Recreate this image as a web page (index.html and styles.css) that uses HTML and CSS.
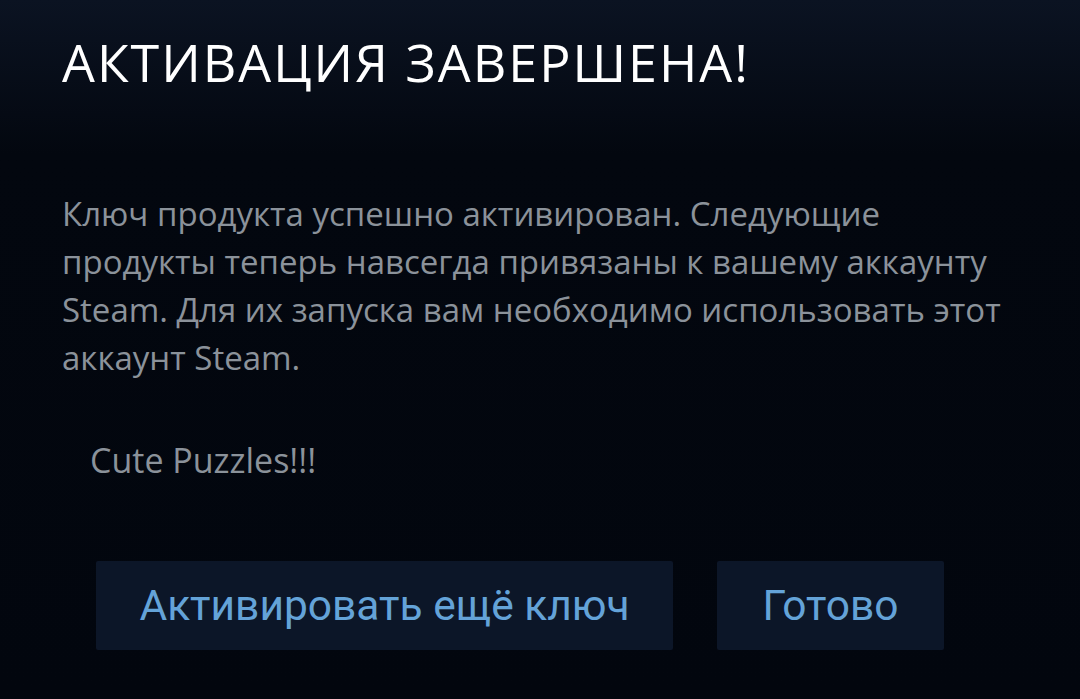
FILE: index.html
```html
<!DOCTYPE html>
<html lang="ru">
<head>
  <meta charset="UTF-8" />
  <meta name="viewport" content="width=device-width, initial-scale=1.0" />
  <title>Активация завершена</title>
  <link rel="stylesheet" href="styles.css">
</head>
<body>
  <div class="dialog">
    <h1 class="title">АКТИВАЦИЯ ЗАВЕРШЕНА!</h1>

    <p class="message">
      Ключ продукта успешно активирован. Следующие<br>
      продукты теперь навсегда привязаны к вашему аккаунту<br>
      Steam. Для их запуска вам необходимо использовать этот<br>
      аккаунт Steam.
    </p>

    <ul class="products">
      <li>Cute Puzzles!!!</li>
    </ul>

    <div class="actions">
      <button class="btn btn-wide">Активировать ещё ключ</button>
      <button class="btn">Готово</button>
    </div>
  </div>
</body>
</html>
```

FILE: styles.css
```css
html, body {
  height: 100%;
}

body {
  margin: 0;
  background: linear-gradient(180deg, #0b1322 0%, #03070f 22%, #02060e 100%);
  font-family: 'Open Sans', 'Noto Sans', sans-serif;
  overflow: hidden;
}

.dialog {
  padding: 30px 62px 0 62px;
  display: flex;
  flex-direction: column;
}

.title {
  margin: 0;
  color: #ffffff;
  font-weight: 400;
  font-size: 52px;
  letter-spacing: 2px;
  line-height: 64px;
}

.message {
  margin: 96px 0 0 0;
  color: #8b929a;
  font-size: 33px;
  line-height: 48px;
}

.products {
  list-style: none;
  margin: 56px 0 0 0;
  padding: 0 0 0 28px;
  color: #8b929a;
  font-size: 34px;
  line-height: 44px;
}

.actions {
  display: flex;
  gap: 44px;
  margin-top: 79px;
  padding-left: 34px;
}

.btn {
  height: 89px;
  width: 227px;
  border: none;
  border-radius: 2px;
  background: #0c1628;
  color: #64a3d8;
  font-family: Roboto, 'Noto Sans', sans-serif;
  font-size: 42.5px;
  cursor: pointer;
}

.btn-wide {
  width: 577px;
}
```
